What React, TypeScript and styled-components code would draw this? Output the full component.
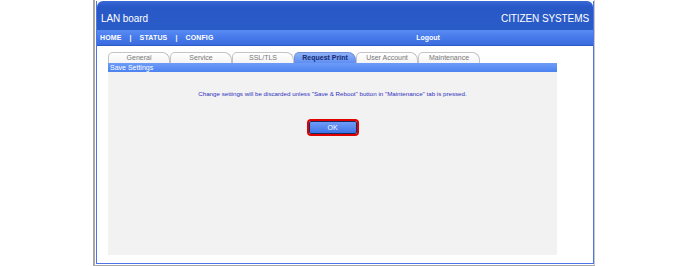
import styled, { createGlobalStyle } from 'styled-components'

const GlobalStyle = createGlobalStyle`
  html, body {
    margin: 0;
    padding: 0;
    background: #ffffff;
  }
  body {
    font-family: 'Liberation Sans', Arial, sans-serif;
  }
`

const tabs = ['General', 'Service', 'SSL/TLS', 'Request Print', 'User Account', 'Maintenance']
const activeTab = 'Request Print'

export default function App() {
  return (
    <>
      <GlobalStyle />
      <Page>
        <Frame>
          <Inner>
            <Header>
              <Title>LAN board</Title>
              <Title>CITIZEN SYSTEMS</Title>
            </Header>
            <NavBar>
              <NavLinks>
                <NavLink>HOME</NavLink>
                <Sep>|</Sep>
                <NavLink>STATUS</NavLink>
                <Sep>|</Sep>
                <NavLink>CONFIG</NavLink>
              </NavLinks>
              <Logout>Logout</Logout>
            </NavBar>
            <Body>
              <TabRow>
                {tabs.map((t) => (
                  <Tab key={t} $active={t === activeTab}>
                    {t}
                  </Tab>
                ))}
              </TabRow>
              <SectionBar>Save Settings</SectionBar>
              <Panel>
                <Message>
                  Change settings will be discarded unless "Save &amp; Reboot" button in
                  "Maintenance" tab is pressed.
                </Message>
                <OkButton>OK</OkButton>
              </Panel>
            </Body>
          </Inner>
        </Frame>
      </Page>
    </>
  )
}

const Page = styled.div`
  width: 688px;
  height: 266px;
  display: flex;
  justify-content: center;
  box-sizing: border-box;
`

const Frame = styled.div`
  width: 502px;
  height: 266px;
  box-sizing: border-box;
  border-left: 2px solid #a8a8a8;
  border-right: 1px solid #c8c8c8;
  border-bottom: 1px solid #a8a8a8;
  padding: 1px 0 1px 1px;
`

const Inner = styled.div`
  height: 100%;
  box-sizing: border-box;
  border: 1px solid #4d74e8;
  border-top: none;
  display: flex;
  flex-direction: column;
  background: #ffffff;
`

const Header = styled.div`
  height: 29px;
  display: flex;
  align-items: center;
  justify-content: space-between;
  padding: 6px 4px 0 4px;
  box-sizing: border-box;
  background: linear-gradient(#3a6ad8 0%, #2858c6 20%, #2a5cc8 100%);
  border-top-left-radius: 6px;
  border-top-right-radius: 6px;
`

const Title = styled.span`
  color: #ffffff;
  font-size: 10px;
  letter-spacing: -0.1px;
`

const NavBar = styled.div`
  height: 15px;
  display: flex;
  align-items: center;
  padding: 0 3px;
  background: linear-gradient(#5a8cf4 0%, #4679ea 50%, #3b6cde 100%);
  border-bottom: 1px solid #2d5ac4;
`

const NavLinks = styled.div`
  display: flex;
  align-items: center;
  gap: 8px;
  width: 308px;
`

const NavLink = styled.span`
  color: #ffffff;
  font-size: 7px;
  font-weight: bold;
  letter-spacing: 0.15px;
`

const Sep = styled.span`
  color: #ffffff;
  font-size: 7px;
  font-weight: bold;
`

const Logout = styled.span`
  color: #ffffff;
  font-size: 7px;
  font-weight: bold;
  width: 40px;
  text-align: center;
`

const Body = styled.div`
  flex: 1;
  display: flex;
  flex-direction: column;
  padding: 6px 36px 8px 11px;
`

const TabRow = styled.div`
  display: flex;
  height: 11px;
`

const Tab = styled.div<{ $active: boolean }>`
  width: 62px;
  box-sizing: border-box;
  font-size: 7px;
  text-align: center;
  line-height: 10px;
  border: 1px solid ${(p) => (p.$active ? '#6f8fd8' : '#c4c4c4')};
  border-bottom: none;
  border-radius: 5px 8px 0 0;
  color: ${(p) => (p.$active ? '#1a2a70' : '#777777')};
  font-weight: ${(p) => (p.$active ? 'bold' : 'normal')};
  background: ${(p) =>
    p.$active ? 'linear-gradient(#8fb2f8, #5d8ef2)' : 'linear-gradient(#ffffff, #f4f4f4)'};
`

const SectionBar = styled.div`
  height: 9px;
  line-height: 9px;
  font-size: 7px;
  color: #ffffff;
  padding-left: 2px;
  background: linear-gradient(#6d9bf8, #4c82f0);
`

const Panel = styled.div`
  flex: 1;
  background: #f2f2f2;
  display: flex;
  flex-direction: column;
  align-items: center;
  padding-top: 18px;
`

const Message = styled.div`
  font-size: 6.2px;
  color: #3030c0;
`

const OkButton = styled.button`
  margin-top: 24px;
  width: 48px;
  height: 13px;
  padding: 0;
  font-family: 'Liberation Sans', Arial, sans-serif;
  font-size: 7px;
  color: #ffffff;
  background: linear-gradient(#6f9cf8, #3f74e8);
  border: 1px solid #1a2a60;
  box-shadow: 0 0 0 2px #e00000;
  border-radius: 2px;
`
